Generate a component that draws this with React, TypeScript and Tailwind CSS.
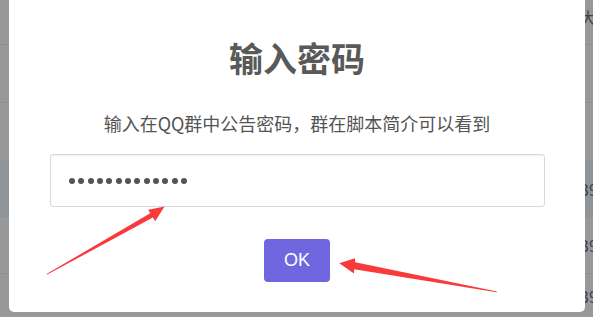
import React from "react";

const rows = [
  { h: 45, band: false, text: "大", line: true, top: true },
  { h: 58, band: false, text: "", line: true, top: false },
  { h: 57, band: false, text: "", line: false, top: false },
  { h: 57, band: true, text: "39", line: false, top: false },
  { h: 57, band: false, text: "39", line: true, top: false },
  { h: 43, band: false, text: "39", line: false, top: false },
];

export default function App() {
  const dots = Array.from({ length: 13 });
  return (
    <div className="relative w-[593px] h-[317px] overflow-hidden bg-[#989898]" style={{ fontFamily: '"Noto Sans CJK SC", "Noto Sans", sans-serif' }}>
      {/* dimmed page behind the dialog */}
      <div className="flex flex-col">
        {rows.map((r, i) => (
          <div
            key={i}
            className={`flex ${r.top ? "items-start pt-[9px]" : "items-center"} ${r.band ? "bg-[#8e9497]" : ""} ${r.line ? "border-b border-[#8f8f8f]" : ""}`}
            style={{ height: r.h }}
          >
            <div className="w-[580px] shrink-0" />
            <span className="text-[16px] text-[#3e4250] leading-none">{r.text}</span>
          </div>
        ))}
      </div>

      {/* dialog */}
      <div className="absolute left-[9px] top-[-8px] w-[576px] h-[320px] bg-white rounded-[5px] flex flex-col items-center pt-[45px]">
        <h2 className="text-[34px] leading-[41px] font-bold text-[#595959]">输入密码</h2>
        <p className="mt-[33px] text-[18px] leading-[24px] text-[#545454]">输入在QQ群中公告密码，群在脚本简介可以看到</p>
        <div className="mt-[19px] w-[495px] h-[53px] border border-[#d9d9d9] rounded-[3px] flex items-center pl-[18px] gap-[3.33px] shadow-[inset_0_1px_1px_rgba(0,0,0,0.06)] self-start ml-[41px]">
          {dots.map((_, i) => (
            <span key={i} className="w-[6px] h-[6px] rounded-full bg-[#545454]" />
          ))}
        </div>
        <button className="mt-[32px] w-[66px] h-[43px] rounded-[4px] bg-[#7066e0] text-white text-[18px] flex items-center justify-center" style={{ fontFamily: '"Liberation Sans", Arial, sans-serif' }}>
          OK
        </button>
      </div>

      {/* annotation arrows */}
      <svg className="absolute inset-0 pointer-events-none" width="593" height="317" viewBox="0 0 593 317">
        <polygon
          fill="#f83a3a"
          points="46.5,274 150.2,213.3 148.3,209.8 164.5,206.6 155.2,221.2 152.9,217.5 47.3,274.6"
        />
        <polygon
          fill="#f83a3a"
          points="497,291.4 355.2,262.3 355,258.2 339.2,263.3 354,273.5 354.2,269.3 496.6,292.2"
        />
      </svg>
    </div>
  );
}
